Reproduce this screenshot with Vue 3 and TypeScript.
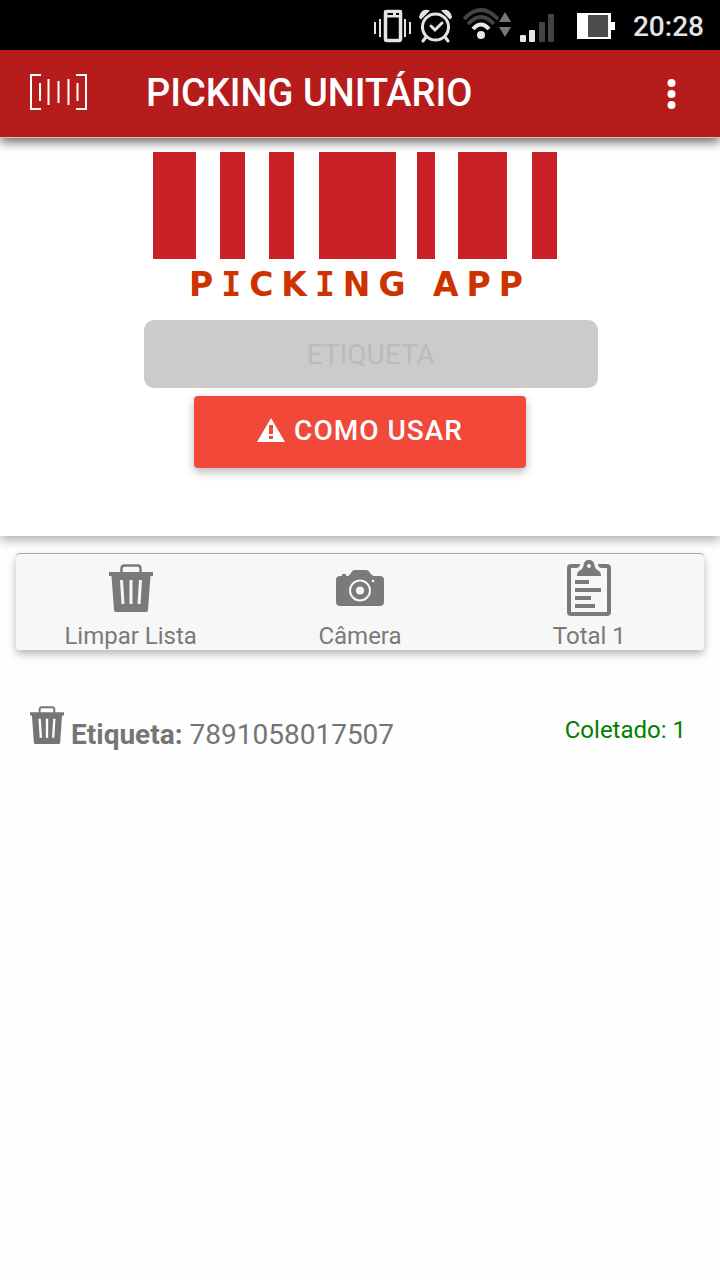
<script setup lang="ts">
import { ref } from 'vue'

interface Item {
  code: string
  collected: number
}

const label = ref('')
const items = ref<Item[]>([{ code: '7891058017507', collected: 1 }])

// x position and width of every bar in the logo
const bars: [number, number][] = [
  [0, 43], [67, 25], [116, 25], [166, 77], [264, 18], [305, 49], [379, 25],
]
</script>

<template>
  <div class="app">
    <div class="status">
      <svg class="s-vibrate" width="38" height="34" viewBox="0 0 38 34" fill="none" stroke="#e4e4e4">
        <path d="M1 13v12M6 10v18M31 10v18M36 13v12" stroke-width="2" />
        <rect x="11.500" y="2.500" width="15" height="29" rx="1.500" stroke-width="3.500" />
        <path d="M10 1.500h18v7H10z" fill="#e4e4e4" stroke="none" />
        <path d="M13.500 5h5.500M22 5h3" stroke="#000" stroke-width="2" />
      </svg>
      <svg class="s-alarm" width="34" height="34" viewBox="0 0 34 34" fill="none" stroke="#e4e4e4" stroke-linecap="round">
        <circle cx="16.500" cy="18" r="13" stroke-width="3" />
        <path d="M12 17l4 4 7-7" stroke-width="3" />
        <path d="M7 28l-3 4M26 28l3 4" stroke-width="3" />
        <path d="M1 8C2 3 5 1 9 2L2 9zM32 8C31 3 28 1 24 2l7 7z" fill="#e4e4e4" stroke-width="2" />
      </svg>
      <svg class="s-wifi" width="48" height="34" viewBox="0 0 48 34" fill="none">
        <path d="M1 11Q18-7 35 11" stroke="#444" stroke-width="4" />
        <path d="M5 16Q18 2 31 16" stroke="#444" stroke-width="4" />
        <path d="M10 21Q18 12 26 21" stroke="#e8e8e8" stroke-width="4" />
        <circle cx="18" cy="27" r="4" fill="#e8e8e8" />
        <path d="M42 4l6 10H36zM42 29l6-10H36z" fill="#777" />
      </svg>
      <svg class="s-signal" width="35" height="30" viewBox="0 0 35 30">
        <rect y="22" width="6" height="7" rx="1" fill="#e8e8e8" />
        <rect x="9" y="17" width="6" height="12" rx="1" fill="#e8e8e8" />
        <rect x="19" y="9" width="6" height="20" rx="1" fill="#444" />
        <rect x="28" y="1" width="6" height="28" rx="1" fill="#444" />
      </svg>
      <svg class="s-battery" width="38" height="26" viewBox="0 0 38 26">
        <path d="M0 0h34v9h4v8h-4v9H0z" fill="#fff" />
        <path d="M11 2h20v22H11z" fill="#4c4c4c" />
      </svg>
      <span class="clock">20:28</span>
    </div>

    <header class="bar">
      <svg class="scan" width="58" height="36" viewBox="0 0 58 36" fill="none" stroke="#fff" stroke-width="2">
        <path d="M11 1H1v34h10M46 1h10v34H46M10 9v18M18.500 5v26M28.500 7v22M38.500 5v26M47.500 9v18" />
      </svg>
      <h1>PICKING UNITÁRIO</h1>
      <button class="more" type="button" aria-label="Menu">
        <svg width="10" height="32" viewBox="0 0 10 32" fill="#fff">
          <circle cx="5.500" cy="5" r="4" /><circle cx="5.500" cy="16" r="4" /><circle cx="5.500" cy="27" r="4" />
        </svg>
      </button>
    </header>

    <section class="hero">
      <svg class="logo" width="404" height="107" viewBox="0 0 404 107" fill="#c92127">
        <rect v-for="[x, w] in bars" :key="x" :x="x" y="0" :width="w" height="107" />
      </svg>
      <p class="brand">P<span class="slab">I</span>CK<span class="slab">I</span>NG APP</p>
      <input v-model="label" class="field" type="text" placeholder="ETIQUETA" aria-label="Etiqueta" disabled />
      <button class="howto" type="button">
        <svg width="28" height="24" viewBox="0 0 28 24">
          <path d="M14 0l14 24H0z" fill="#fff" />
          <path d="M12 7h4v9h-4zM12 18h4v3h-4z" fill="#f1483a" />
        </svg>
        <span>COMO USAR</span>
      </button>
    </section>

    <nav class="tools">
      <button type="button">
        <svg class="glyph" width="44" height="48" viewBox="0 0 44 48">
          <path d="M12.500 9V4.500Q12.500 1.500 15.500 1.500h13Q31.500 1.500 31.500 4.500V9" fill="none" stroke="#7a7a7a" stroke-width="2.500" />
          <path d="M0 8h44v4h-2.500L39 46q0 2-2 2H7q-2 0-2-2L2.500 12H0z" fill="#7a7a7a" />
          <path d="M11 16h3l1.500 24h-3zM20.500 16h3v24h-3zM30 16h3l-1.500 24h-3z" fill="#f7f7f7" />
        </svg>
        <span>Limpar Lista</span>
      </button>
      <button type="button">
        <svg class="glyph" width="48" height="36" viewBox="0 0 48 36">
          <path d="M4 6h2V4h4v2h2c3-1 3-6 7-6h11c4 0 4 5 8 6h6q4 0 4 4v22q0 4-4 4H4q-4 0-4-4V10q0-4 4-4z" fill="#7a7a7a" />
          <circle cx="24" cy="20.500" r="10" fill="none" stroke="#f7f7f7" stroke-width="2" />
          <circle cx="24" cy="20.500" r="4" fill="#f7f7f7" />
          <circle cx="37" cy="11" r="1.300" fill="#f7f7f7" />
        </svg>
        <span>Câmera</span>
      </button>
      <button type="button">
        <svg class="glyph" width="44" height="56" viewBox="0 0 44 56" fill="#7a7a7a">
          <path d="M13 4q0 4-4 4H4v44h36V8h-5q-4 0-4-4h9q4 0 4 4v44q0 4-4 4H4q-4 0-4-4V8q0-4 4-4z" />
          <path fill-rule="evenodd" d="M22 0q5 0 5.500 5.500Q28 9 32 11q2 1 2 5H10q0-4 2-5 4-2 4.500-5.500Q17 0 22 0zm0 4a2 2 0 100 4 2 2 0 000-4z" />
          <path d="M8 20h14v4H8zM8 28h26v4H8zM8 36h16v4H8zM8 44h20v4H8z" />
        </svg>
        <span>Total {{ items.length }}</span>
      </button>
    </nav>

    <ul class="list">
      <li v-for="item in items" :key="item.code">
        <button class="remove" type="button" aria-label="Remover">
          <svg width="34" height="38" viewBox="0 0 44 48" preserveAspectRatio="none">
            <path d="M12.500 9V4.500Q12.500 1.500 15.500 1.500h13Q31.500 1.500 31.500 4.500V9" fill="none" stroke="#757575" stroke-width="2.500" />
            <path d="M0 8h44v4h-2.500L39 46q0 2-2 2H7q-2 0-2-2L2.500 12H0z" fill="#757575" />
            <path d="M11 16h3l1.500 24h-3zM20.500 16h3v24h-3zM30 16h3l-1.500 24h-3z" fill="#fff" />
          </svg>
        </button>
        <span class="code"><b>Etiqueta:</b> {{ item.code }}</span>
        <span class="count">Coletado: {{ item.collected }}</span>
      </li>
    </ul>
  </div>
</template>

<style>
body {
  margin: 0;
  background: #fefefe;
}
</style>

<style scoped>
.app {
  min-height: 100vh;
  background: #fefefe;
  color: #757575;
  font-family: Roboto, "Liberation Sans", sans-serif;
}

svg {
  display: block;
  flex: none;
}

button {
  padding: 0;
  border: 0;
  background: none;
  color: inherit;
  font: inherit;
}

.status {
  display: flex;
  align-items: center;
  justify-content: flex-end;
  height: 50px;
  padding-right: 16px;
  background: #000;
}

.s-vibrate,
.s-alarm {
  margin-top: 2px;
}

.s-alarm {
  margin-left: 7px;
}

.s-wifi {
  margin-left: 10px;
}

.s-signal {
  margin-left: 9px;
  margin-top: 6px;
}

.s-battery {
  margin-left: 22px;
  margin-top: 2px;
}

.clock {
  margin-left: 18px;
  padding-top: 4px;
  color: #e4e4e4;
  font-size: 28px;
  font-weight: 500;
  line-height: 34px;
}

.bar {
  position: relative;
  display: flex;
  align-items: center;
  height: 87px;
  padding: 0 44px 0 30px;
  border-bottom: 1px solid #e3b5b5;
  background: #b71c1c;
  box-shadow: 0 4px 10px rgba(0, 0, 0, 0.6);
}

.scan {
  margin-bottom: 4px;
}

h1 {
  flex: 1;
  margin: 0 0 2px 58px;
  color: #fff;
  font-size: 38px;
  font-weight: 500;
  line-height: 44px;
}

.hero {
  display: flex;
  flex-direction: column;
  padding: 14px 0 68px;
  background: #fff;
  box-shadow: 0 4px 10px rgba(0, 0, 0, 0.32);
}

.logo {
  align-self: center;
  margin-right: 10px;
}

.brand {
  align-self: center;
  margin: 6px 0 0;
  color: #cc3300;
  font-family: "DejaVu Sans", sans-serif;
  font-size: 33px;
  font-weight: 700;
  line-height: 40px;
  letter-spacing: 8px;
}

.slab {
  font-family: "DejaVu Sans Mono", monospace;
}

.field {
  box-sizing: border-box;
  width: 63%;
  height: 68px;
  margin: 15px 0 8px 20%;
  border: 0;
  border-radius: 10px;
  background: #cbcbcb;
  color: #757575;
  font-family: inherit;
  font-size: 28px;
  text-align: center;
}

.field::placeholder {
  color: #bbb;
}

.howto {
  display: flex;
  align-self: center;
  align-items: center;
  justify-content: center;
  gap: 9px;
  width: 332px;
  height: 72px;
  padding-bottom: 4px;
  border-radius: 4px;
  background: #f1483a;
  box-shadow: 0 4px 10px rgba(0, 0, 0, 0.28);
  color: #fff;
  font-size: 28px;
  font-weight: 500;
  letter-spacing: 1px;
}

.tools {
  display: grid;
  grid-template-columns: repeat(3, 1fr);
  height: 96px;
  margin: 17px 16px 0;
  border-top: 1px solid #aaa;
  border-radius: 4px;
  background: #f7f7f7;
  box-shadow: 0 4px 9px rgba(0, 0, 0, 0.28);
  color: #7a7a7a;
  font-size: 24px;
  line-height: 28px;
}

.tools button {
  display: flex;
  flex-direction: column;
  align-items: center;
}

.glyph {
  margin: auto;
}

.list {
  margin: 0;
  padding: 56px 34px 0 30px;
  list-style: none;
}

.list li {
  display: flex;
  align-items: flex-start;
}

.code {
  flex: 1;
  margin: 13px 0 0 7px;
  font-size: 28px;
  line-height: 32px;
}

.count {
  margin-top: 10px;
  color: #008000;
  font-size: 24px;
  line-height: 28px;
}
</style>
